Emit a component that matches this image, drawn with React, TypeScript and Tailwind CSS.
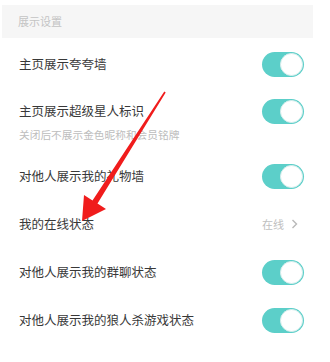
import React from 'react';

const Toggle = () => (
  <div className="w-[42px] h-[25px] rounded-full bg-[#5ccfc9] flex items-center justify-end pr-[1px]">
    <div className="w-[23px] h-[23px] rounded-full bg-white border border-[#d8eeed]" />
  </div>
);

const Row = ({ title, children }: { title: string; children?: React.ReactNode }) => (
  <div className="h-[48px] flex items-center justify-between pl-[17px] pr-[9px]">
    <span className="text-[12.5px] text-[#383838]">{title}</span>
    {children ?? <Toggle />}
  </div>
);

export default function App() {
  return (
    <div
      className="relative w-[330px] h-[362px] overflow-hidden bg-white"
      style={{ fontFamily: '"Noto Sans CJK SC", "Noto Sans", sans-serif' }}
    >
      <div className="ml-[2px] w-[311px] pt-[5px]">
        {/* Section header */}
        <div className="h-[33px] bg-[#f6f6f6] flex items-center pl-[16px]">
          <span className="text-[11px] text-[#c4c4c4]">展示设置</span>
        </div>

        <div className="mt-[2px]">
          <Row title="主页展示夸夸墙" />

          <div className="h-[64px] pt-[13px] pl-[17px] pr-[9px]">
            <div className="h-[20px] flex items-center justify-between">
              <span className="text-[12.5px] text-[#383838]">主页展示超级星人标识</span>
              <Toggle />
            </div>
            <div className="mt-[7px] text-[10.7px] leading-[14px] text-[#bdbdbd]">
              关闭后不展示金色昵称和会员铭牌
            </div>
          </div>

          <Row title="对他人展示我的礼物墙" />

          <Row title="我的在线状态">
            <div className="flex items-center gap-[7px] pr-[6px]">
              <span className="text-[11px] text-[#c0c0c0]">在线</span>
              <svg width="7" height="10" viewBox="0 0 7 10" fill="none">
                <path d="M1.5 1 L5.5 5 L1.5 9" stroke="#b8b8b8" strokeWidth="1.4" />
              </svg>
            </div>
          </Row>

          <Row title="对他人展示我的群聊状态" />
          <Row title="对他人展示我的狼人杀游戏状态" />

          <div className="h-[48px] flex items-center pl-[17px]">
            <span className="text-[12.5px] text-[#d0d0d0]">对他人展示我的语音房状态</span>
          </div>
        </div>
      </div>

      {/* red annotation arrow */}
      <svg
        className="absolute inset-0 pointer-events-none"
        width="330"
        height="362"
        viewBox="0 0 330 362"
      >
        <polygon
          points="164.3,91.5 165.7,92.5 97.5,203.6 106,209 82,221 84,195 92.5,200.4"
          fill="#f01c1c"
        />
      </svg>
    </div>
  );
}
